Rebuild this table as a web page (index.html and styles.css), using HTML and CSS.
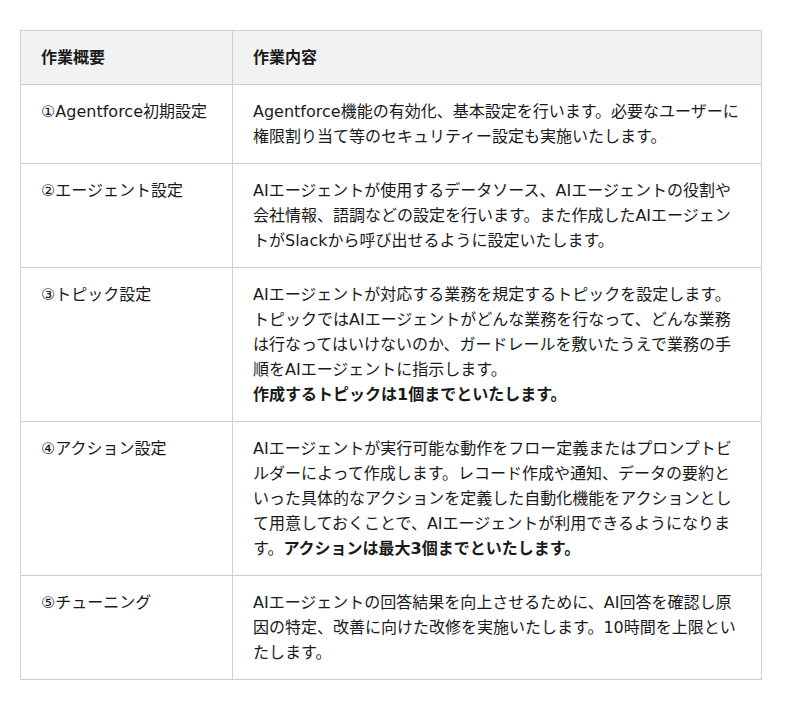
FILE: index.html
```html
<!DOCTYPE html>
<html lang="ja">
<head>
<meta charset="utf-8">
<link rel="stylesheet" href="styles.css">
</head>
<body>
<div class="wrap">
<table class="tbl">
<thead>
<tr><th class="c1">作業概要</th><th>作業内容</th></tr>
</thead>
<tbody>
<tr><td class="c1">①Agentforce初期設定</td><td>Agentforce機能の有効化、基本設定を行います。必要なユーザーに権限割り当て等のセキュリティー設定も実施いたします。</td></tr>
<tr><td class="c1">②エージェント設定</td><td>AIエージェントが使用するデータソース、AIエージェントの役割や会社情報、語調などの設定を行います。また作成したAIエージェン<br>トがSlackから呼び出せるように設定いたします。</td></tr>
<tr><td class="c1">③トピック設定</td><td>AIエージェントが対応する業務を規定するトピックを設定します。トピックではAIエージェントがどんな業務を行なって、どんな業務は行なってはいけないのか、ガードレールを敷いたうえで業務の手順をAIエージェントに指示します。<br><strong>作成するトピックは1個までといたします。</strong></td></tr>
<tr><td class="c1">④アクション設定</td><td>AIエージェントが実行可能な動作をフロー定義またはプロンプトビルダーによって作成します。レコード作成や通知、データの要約といった具体的なアクションを定義した自動化機能をアクションとして用意しておくことで、AIエージェントが利用できるようになります。<strong>アクションは最大3個までといたします。</strong></td></tr>
<tr><td class="c1">⑤チューニング</td><td>AIエージェントの回答結果を向上させるために、AI回答を確認し原因の特定、改善に向けた改修を実施いたします。10時間を上限といたします。</td></tr>
</tbody>
</table>
</div>
</body>
</html>
```
FILE: styles.css
```css
html, body {
  margin: 0;
  padding: 0;
  background: #fff;
}
body {
  font-family: "DejaVu Sans", "Noto Sans CJK JP", sans-serif;
  font-size: 16px;
  line-height: 25px;
  color: #1a1a1a;
}
.wrap {
  padding: 30px 38px 0 20px;
}
.tbl {
  width: 742px;
  border-collapse: collapse;
  table-layout: fixed;
}
.tbl th, .tbl td {
  border: 1px solid #cfcfcf;
  padding: 14px 20px 14px 20px;
  text-align: left;
  vertical-align: top;
}
.tbl th {
  background: #f2f2f2;
  font-weight: bold;
}
.tbl .c1 {
  width: 171px;
}
.tbl strong {
  font-weight: bold;
}
```
